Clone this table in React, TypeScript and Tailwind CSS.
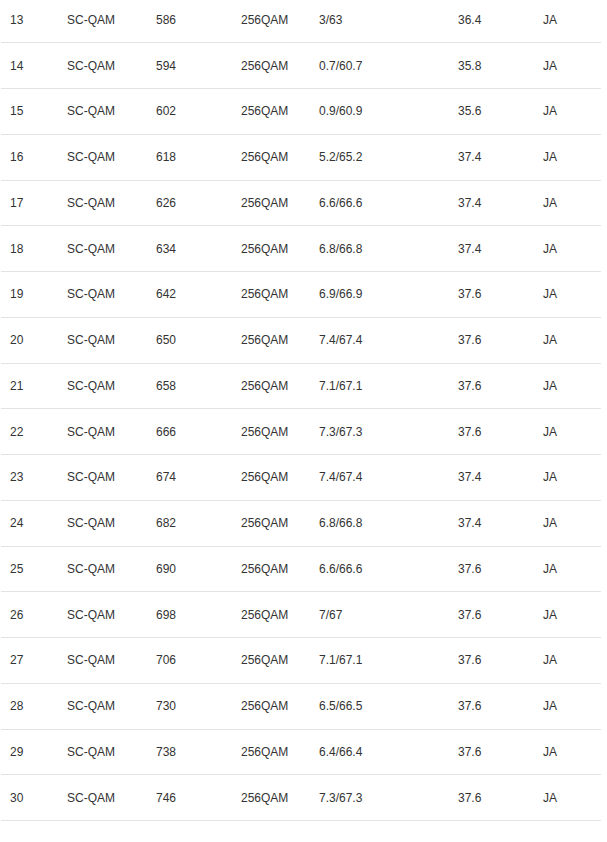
const rows: [number, number, string, string, string][] = [
  [13, 586, "3/63", "36.4", "JA"],
  [14, 594, "0.7/60.7", "35.8", "JA"],
  [15, 602, "0.9/60.9", "35.6", "JA"],
  [16, 618, "5.2/65.2", "37.4", "JA"],
  [17, 626, "6.6/66.6", "37.4", "JA"],
  [18, 634, "6.8/66.8", "37.4", "JA"],
  [19, 642, "6.9/66.9", "37.6", "JA"],
  [20, 650, "7.4/67.4", "37.6", "JA"],
  [21, 658, "7.1/67.1", "37.6", "JA"],
  [22, 666, "7.3/67.3", "37.6", "JA"],
  [23, 674, "7.4/67.4", "37.4", "JA"],
  [24, 682, "6.8/66.8", "37.4", "JA"],
  [25, 690, "6.6/66.6", "37.6", "JA"],
  [26, 698, "7/67", "37.6", "JA"],
  [27, 706, "7.1/67.1", "37.6", "JA"],
  [28, 730, "6.5/66.5", "37.6", "JA"],
  [29, 738, "6.4/66.4", "37.6", "JA"],
  [30, 746, "7.3/67.3", "37.6", "JA"],
];

export default function App() {
  return (
    <div className="min-h-[842px] bg-white font-['Liberation_Sans',Arial,sans-serif] text-[12px] text-[#333]">
      <div className="ml-px mt-[-2.4px] w-[600px]">
        {rows.map(([ch, freq, pwr, snr, lock]) => (
          <div
            key={ch}
            className="grid h-[45.76px] grid-cols-[57px_89px_85px_78px_139px_85px_1fr] items-center border-b border-[#e3e3e3] pl-[9px]"
          >
            <span>{ch}</span>
            <span>SC-QAM</span>
            <span>{freq}</span>
            <span>256QAM</span>
            <span>{pwr}</span>
            <span>{snr}</span>
            <span>{lock}</span>
          </div>
        ))}
      </div>
    </div>
  );
}
